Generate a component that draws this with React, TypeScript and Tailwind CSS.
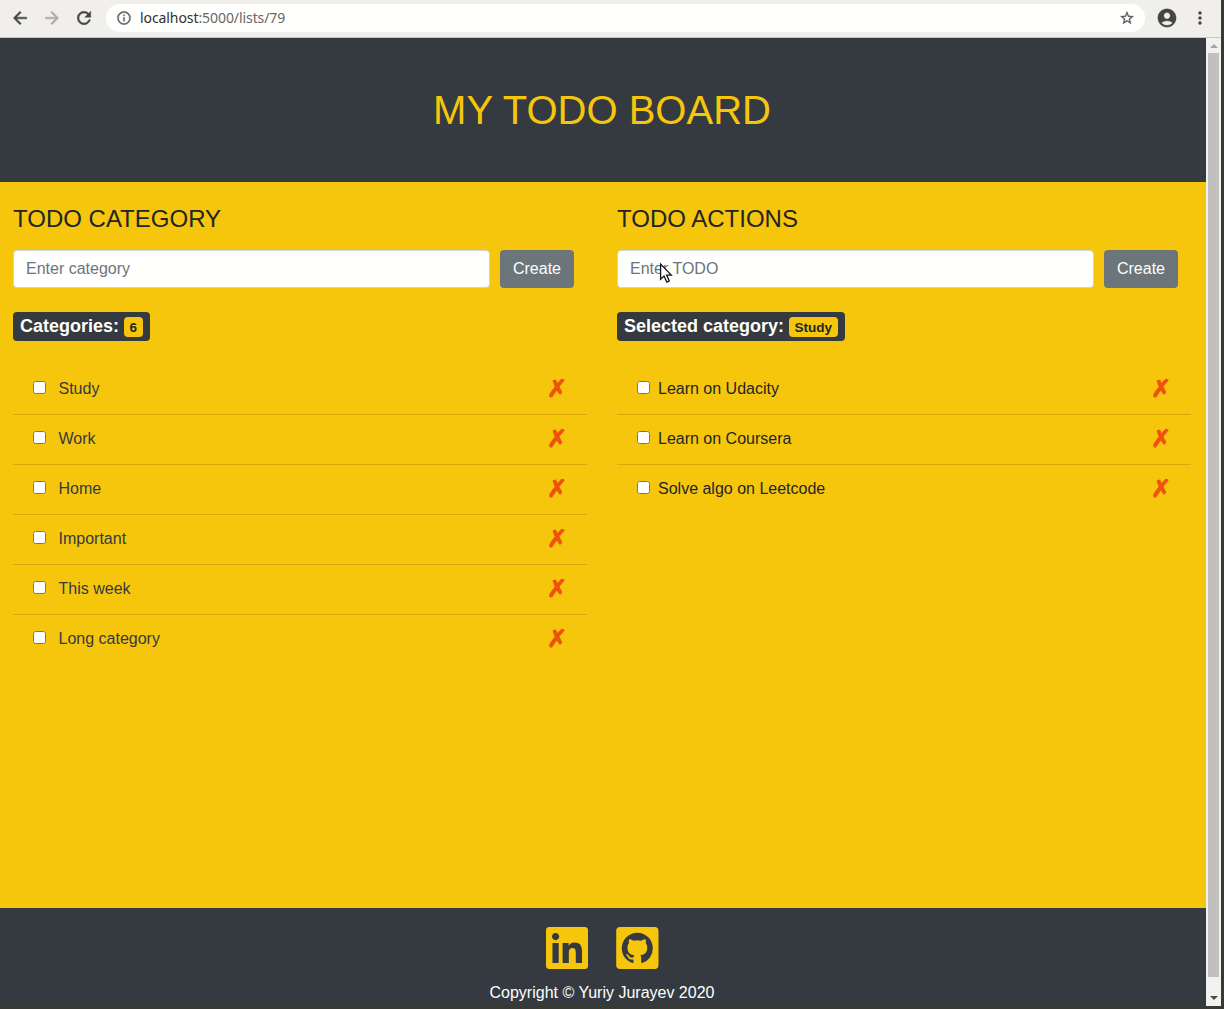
import React from "react";
import { FaLinkedin } from "react-icons/fa";
import {
  MdArrowBack,
  MdArrowForward,
  MdRefresh,
  MdInfoOutline,
  MdStarBorder,
  MdAccountCircle,
  MdMoreVert,
} from "react-icons/md";

const categories = ["Study", "Work", "Home", "Important", "This week", "Long category"];
const todos = ["Learn on Udacity", "Learn on Coursera", "Solve algo on Leetcode"];

function BrowserBar() {
  return (
    <div className="flex h-[38px] shrink-0 items-start border-b border-[#c9c9c6] bg-[#f0efeb] pl-2.5 pt-1 text-[#454545]">
      <div className="flex h-7 items-center gap-3">
        <MdArrowBack className="size-5 [&>path:last-child]:[stroke-width:0.6]" />
        <MdArrowForward className="size-5 text-[#aaaaa7] [&>path:last-child]:[stroke-width:0.6]" />
        <MdRefresh className="size-5 [&>path:last-child]:[stroke-width:0.6]" />
      </div>
      <div className="ml-3 flex h-7 w-[1039px] items-center rounded-full bg-[#fffffd] pl-2.5 pr-2.5">
        <MdInfoOutline className="size-4 text-[#5f6368] [&>path:last-child]:[stroke-width:0.4]" />
        <div className="-mt-0.5 ml-2 font-['Noto_Sans',sans-serif] text-[14px] tracking-[-0.08px] text-[#666]">
          <span className="text-[#303030]">localhost</span>:5000/lists/79
        </div>
        <MdStarBorder className="ml-auto size-4 text-[#555] [&>path:last-child]:[stroke-width:0.4]" />
      </div>
      <MdAccountCircle className="ml-[11px] mt-[3px] size-[22px] [&>path:last-child]:[stroke-width:0.3]" />
      <MdMoreVert className="ml-3 mt-1 size-5" />
    </div>
  );
}

function CreateForm({ placeholder }: { placeholder: string }) {
  return (
    <form className="mt-[17px] flex gap-2.5" onSubmit={(e) => e.preventDefault()}>
      <input
        type="text"
        placeholder={placeholder}
        className="h-[38px] w-[477px] rounded border border-[#ced4da] bg-[#fffffd] px-3 text-base placeholder:text-[#6c757d]"
      />
      <button className="h-[38px] w-[74px] rounded bg-[#6c757a] text-base text-white">
        Create
      </button>
    </form>
  );
}

function Summary({ label, value }: { label: string; value: string }) {
  return (
    <div className="mt-6 flex h-[29px] w-fit items-center rounded bg-[#343a40] px-[7px] font-bold">
      <span className="-mt-0.5 text-[18px] leading-none text-white">{label}</span>
      <span className="ml-[5px] mt-px flex h-5 items-center rounded bg-[#f6c60d] px-[5.5px] pt-px text-[13.5px] leading-none text-[#212529]">
        {value}
      </span>
    </div>
  );
}

function ItemList({ items, labelClass }: { items: string[]; labelClass: string }) {
  return (
    <ul className="mt-6">
      {items.map((item) => (
        <li
          key={item}
          className="flex h-[50px] items-center border-b border-[#d6aa0c] pl-5 pr-5 last:border-transparent"
        >
          <input type="checkbox" className="-mt-1 size-[13px]" />
          <span className={labelClass}>{item}</span>
          <button className="ml-auto -mt-0.5 font-['DejaVu_Sans',sans-serif] text-2xl font-bold leading-none text-[#ee5208] [-webkit-text-stroke:1.1px_#ee5208] [text-shadow:0_1px_0_#fadf78]">
            ✗
          </button>
        </li>
      ))}
    </ul>
  );
}

function GithubIcon() {
  return (
    <svg className="size-12" viewBox="0 0 48 48">
      <rect x="3.2" y="3" width="42.3" height="42" rx="4" fill="#f6c60d" />
      <path
        transform="translate(8.8 8.8) scale(1.94)"
        fill="#343a40"
        d="M8 0C3.58 0 0 3.58 0 8c0 3.54 2.29 6.53 5.47 7.59.4.07.55-.17.55-.38 0-.19-.01-.82-.01-1.49-2.01.37-2.53-.49-2.69-.94-.09-.23-.48-.94-.82-1.13-.28-.15-.68-.52-.01-.53.63-.01 1.08.58 1.23.82.72 1.21 1.87.87 2.33.66.07-.52.28-.87.51-1.07-1.78-.2-3.64-.89-3.64-3.95 0-.87.31-1.59.82-2.15-.08-.2-.36-1.02.08-2.12 0 0 .67-.21 2.2.82.64-.18 1.32-.27 2-.27s1.36.09 2 .27c1.53-1.04 2.2-.82 2.2-.82.44 1.1.16 1.92.08 2.12.51.56.82 1.27.82 2.15 0 3.07-1.87 3.75-3.65 3.95.29.25.54.73.54 1.48 0 1.07-.01 1.93-.01 2.2 0 .21.15.46.55.38A8.01 8.01 0 0016 8c0-4.42-3.58-8-8-8z"
      />
    </svg>
  );
}

function Scrollbar() {
  return (
    <div className="flex w-[15px] shrink-0 flex-col items-center bg-[#f1f1ef]">
      <div className="flex h-[15px] items-center">
        <svg width="8" height="4" viewBox="0 0 8 4" fill="#a3a3a3">
          <path d="M4 0l4 4H0z" />
        </svg>
      </div>
      <div className="h-[924px] w-[11px] bg-[#c1c0be]" />
      <div className="mt-[19px]">
        <svg width="8" height="4" viewBox="0 0 8 4" fill="#4c4c4c">
          <path d="M0 0h8L4 4z" />
        </svg>
      </div>
    </div>
  );
}

function Pointer() {
  return (
    <svg
      className="absolute left-[659px] top-[262px]"
      width="14"
      height="22"
      viewBox="0 0 14 22"
      fill="#fff"
      stroke="#151515"
      strokeWidth="1.3"
    >
      <path d="M1.6 2v15.3l3.4-3.2 2.8 6 2.5-1.2-2.7-5.8h4.7z" />
    </svg>
  );
}

export default function App() {
  return (
    <div className="relative h-[1009px] w-[1224px] overflow-hidden bg-[#393934] pb-[3px] pr-[3px] font-['Liberation_Sans',Arial,sans-serif]">
      <div className="flex h-full flex-col">
        <BrowserBar />
        <div className="flex min-h-0 flex-1">
          <div className="flex w-[1206px] flex-col bg-[#f6c60d] text-[#212529]">
            <header className="flex h-36 items-center justify-center bg-[#343a40] pr-0.5">
              <h1 className="text-[40px] leading-none text-[#f6c60d]">MY TODO BOARD</h1>
            </header>
            <main className="flex flex-1 gap-[30px] pl-[13px] pt-[22px]">
              <section className="w-[574px]">
                <h2 className="text-2xl leading-[29px]">TODO CATEGORY</h2>
                <CreateForm placeholder="Enter category" />
                <Summary label="Categories:" value="6" />
                <ItemList items={categories} labelClass="ml-[12.5px] -mt-0.5 text-base text-[#343a40]" />
              </section>
              <section className="w-[574px]">
                <h2 className="text-2xl leading-[29px]">TODO ACTIONS</h2>
                <CreateForm placeholder="Enter TODO" />
                <Summary label="Selected category:" value="Study" />
                <ItemList items={todos} labelClass="ml-2 -mt-0.5 text-base text-[#212529]" />
              </section>
            </main>
            <footer className="flex h-[98px] flex-col items-center bg-[#343a40] pr-0.5 pt-4">
              <div className="flex gap-[22px] text-[#f6c60d]">
                <FaLinkedin className="size-12" />
                <GithubIcon />
              </div>
              <p className="mt-[9px] text-base text-white">Copyright © Yuriy Jurayev 2020</p>
            </footer>
          </div>
          <Scrollbar />
        </div>
      </div>
      <Pointer />
    </div>
  );
}
